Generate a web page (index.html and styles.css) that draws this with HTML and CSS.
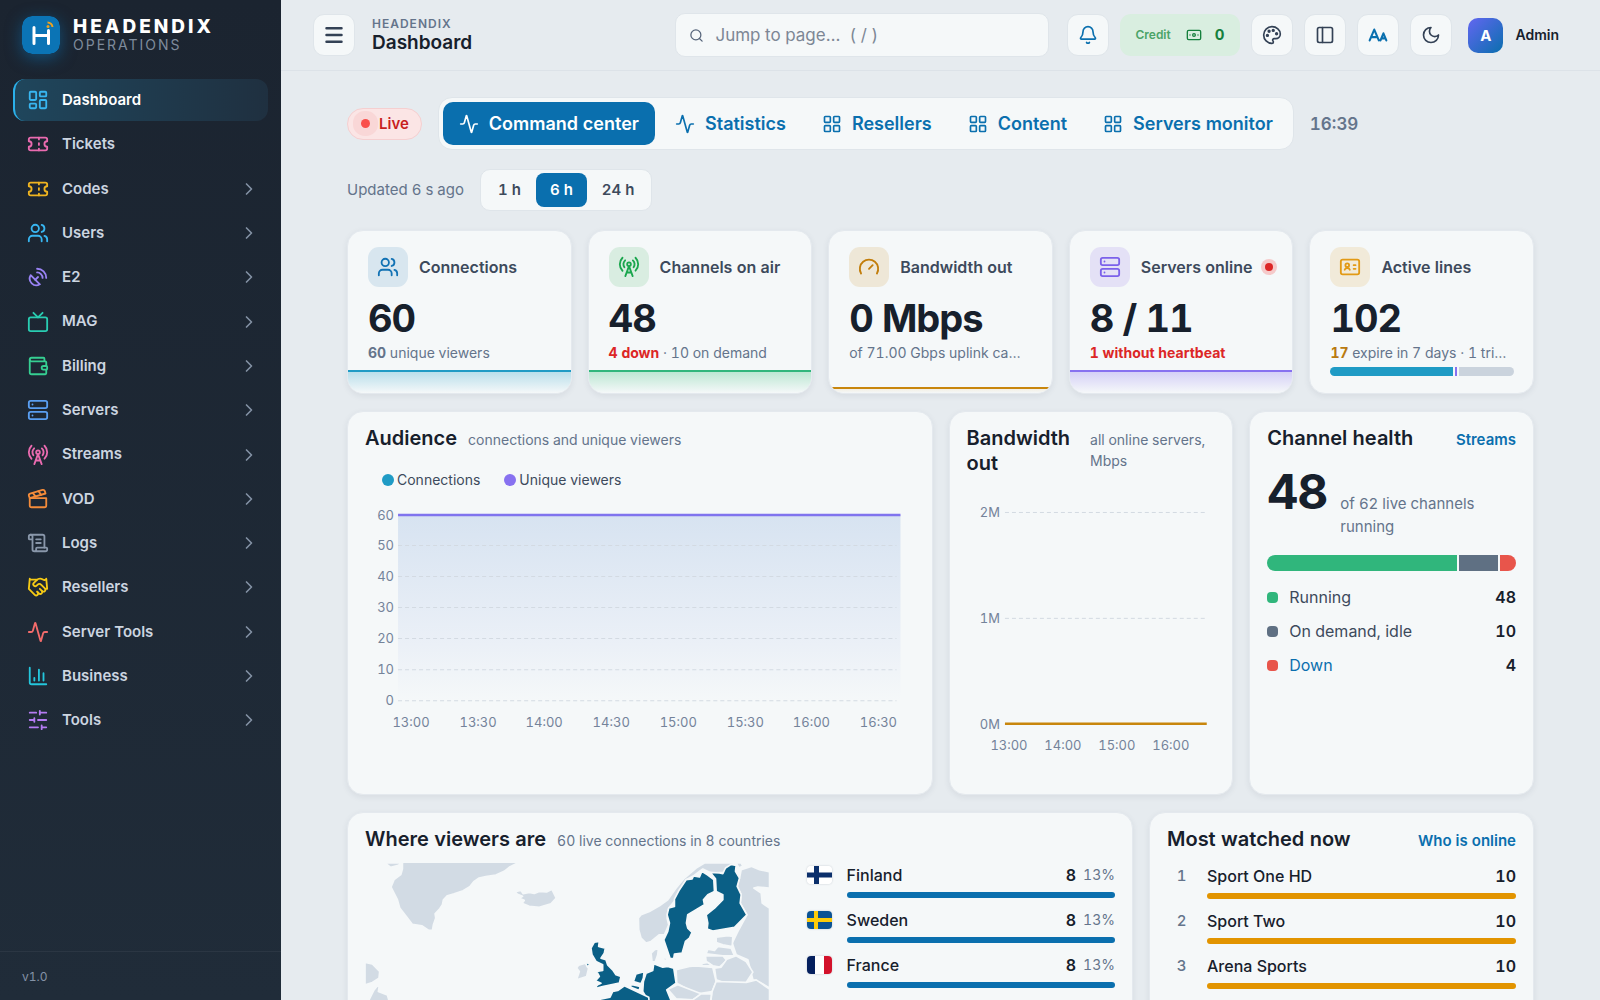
FILE: index.html
```html
<!DOCTYPE html>
<html lang="en">
<head>
<meta charset="utf-8">
<title>Headendix – Dashboard</title>
<meta name="viewport" content="width=device-width, initial-scale=1">
<link rel="stylesheet" href="styles.css">
</head>
<body>
<svg class="sprite" aria-hidden="true">
  <symbol id="i-dashboard" viewBox="0 0 24 24"><rect x="3" y="3" width="7" height="9" rx="1"/><rect x="14" y="3" width="7" height="5" rx="1"/><rect x="14" y="12" width="7" height="9" rx="1"/><rect x="3" y="16" width="7" height="5" rx="1"/></symbol>
  <symbol id="i-ticket" viewBox="0 0 24 24"><path d="M2 9a3 3 0 0 1 0 6v2a2 2 0 0 0 2 2h16a2 2 0 0 0 2-2v-2a3 3 0 0 1 0-6V7a2 2 0 0 0-2-2H4a2 2 0 0 0-2 2Z"/><path d="M13 5v2M13 17v2M13 11v2"/></symbol>
  <symbol id="i-users" viewBox="0 0 24 24"><path d="M16 21v-2a4 4 0 0 0-4-4H6a4 4 0 0 0-4 4v2"/><circle cx="9" cy="7" r="4"/><path d="M22 21v-2a4 4 0 0 0-3-3.87M16 3.13a4 4 0 0 1 0 7.75"/></symbol>
  <symbol id="i-dish" viewBox="0 0 24 24"><path d="M4 10a7.31 7.31 0 0 0 10 10Z"/><path d="m9 15 3-3"/><path d="M17 13a6 6 0 0 0-6-6"/><path d="M21 13A10 10 0 0 0 11 3"/></symbol>
  <symbol id="i-tv" viewBox="0 0 24 24"><rect x="2" y="7" width="20" height="15" rx="2"/><path d="m17 2-5 5-5-5"/></symbol>
  <symbol id="i-wallet" viewBox="0 0 24 24"><path d="M19 7V4a1 1 0 0 0-1-1H5a2 2 0 0 0 0 4h15a1 1 0 0 1 1 1v4h-3a2 2 0 0 0 0 4h3a1 1 0 0 0 1-1v-2a1 1 0 0 0-1-1"/><path d="M3 5v14a2 2 0 0 0 2 2h15a1 1 0 0 0 1-1v-4"/></symbol>
  <symbol id="i-server" viewBox="0 0 24 24"><rect x="2" y="2" width="20" height="8" rx="2"/><rect x="2" y="14" width="20" height="8" rx="2"/><path d="M6 6h.01M6 18h.01"/></symbol>
  <symbol id="i-tower" viewBox="0 0 24 24"><path d="M4.9 16.1C1 12.2 1 5.8 4.9 1.9"/><path d="M7.8 4.7a6.14 6.14 0 0 0-.8 7.5"/><circle cx="12" cy="9" r="2"/><path d="M16.2 4.8c2 2 2.26 5.11.8 7.47"/><path d="M19.1 1.9a9.96 9.96 0 0 1 0 14.1"/><path d="M9.5 18h5M8 22l4-11 4 11"/></symbol>
  <symbol id="i-clapper" viewBox="0 0 24 24"><path d="M20.2 6 3 11l-.9-2.4c-.3-1.1.3-2.2 1.3-2.5l13.5-4c1.1-.3 2.2.3 2.5 1.3Z"/><path d="m6.2 5.3 3.1 3.9M12.4 3.4l3.1 4"/><path d="M3 11h18v8a2 2 0 0 1-2 2H5a2 2 0 0 1-2-2Z"/></symbol>
  <symbol id="i-scroll" viewBox="0 0 24 24"><path d="M15 12h-5M15 8h-5M19 17V5a2 2 0 0 0-2-2H4"/><path d="M8 21h12a2 2 0 0 0 2-2v-1a1 1 0 0 0-1-1H11a1 1 0 0 0-1 1v1a2 2 0 1 1-4 0V5a2 2 0 1 0-4 0v2a1 1 0 0 0 1 1h3"/></symbol>
  <symbol id="i-handshake" viewBox="0 0 24 24"><path d="m11 17 2 2a1 1 0 1 0 3-3"/><path d="m14 14 2.5 2.5a1 1 0 1 0 3-3l-3.88-3.88a3 3 0 0 0-4.24 0l-.88.88a1 1 0 1 1-3-3l2.81-2.81a5.79 5.79 0 0 1 7.06-.87l.47.28a2 2 0 0 0 1.42.25L21 4"/><path d="m21 3 1 11h-2M3 3 2 14l6.5 6.5a1 1 0 1 0 3-3M3 4h8"/></symbol>
  <symbol id="i-activity" viewBox="0 0 24 24"><path d="M22 12h-2.48a2 2 0 0 0-1.93 1.46l-2.35 8.36a.25.25 0 0 1-.48 0L9.24 2.18a.25.25 0 0 0-.48 0l-2.35 8.36A2 2 0 0 1 4.49 12H2"/></symbol>
  <symbol id="i-chart" viewBox="0 0 24 24"><path d="M3 3v16a2 2 0 0 0 2 2h16M18 17V9M13 17V5M8 17v-3"/></symbol>
  <symbol id="i-sliders" viewBox="0 0 24 24"><path d="M21 4h-7M10 4H3M21 12h-9M8 12H3M21 20h-5M12 20H3M14 2v4M8 10v4M16 18v4"/></symbol>
  <symbol id="i-chevron" viewBox="0 0 24 24"><path d="m9 18 6-6-6-6"/></symbol>
  <symbol id="i-menu" viewBox="0 0 24 24"><path d="M3 4h18M3 12h18M3 20h18"/></symbol>
  <symbol id="i-search" viewBox="0 0 24 24"><circle cx="11" cy="11" r="8"/><path d="m21 21-4.3-4.3"/></symbol>
  <symbol id="i-bell" viewBox="0 0 24 24"><path d="M10.3 21a2 2 0 0 0 3.4 0"/><path d="M3.26 15.33A1 1 0 0 0 4 17h16a1 1 0 0 0 .74-1.67C19.41 13.96 18 12.5 18 8A6 6 0 0 0 6 8c0 4.5-1.41 5.96-2.74 7.33"/></symbol>
  <symbol id="i-cash" viewBox="0 0 24 24"><rect x="2" y="5" width="20" height="14" rx="2"/><circle cx="12" cy="12" r="2"/><path d="M6 12h.01M18 12h.01"/></symbol>
  <symbol id="i-palette" viewBox="0 0 24 24"><path d="M12 2a10 10 0 0 0 0 20c.93 0 1.65-.75 1.65-1.69 0-.43-.18-.83-.44-1.12-.29-.29-.44-.65-.44-1.13a1.64 1.64 0 0 1 1.67-1.67h1.99c3.05 0 5.55-2.5 5.55-5.55C21.97 6.01 17.46 2 12 2Z"/><circle cx="13.5" cy="6.5" r="1"/><circle cx="17.5" cy="10.5" r="1"/><circle cx="8.5" cy="7.5" r="1"/><circle cx="6.5" cy="12.5" r="1"/></symbol>
  <symbol id="i-panel" viewBox="0 0 24 24"><rect x="3" y="3" width="18" height="18" rx="2"/><path d="M9 3v18"/></symbol>
  <symbol id="i-letters" viewBox="0 0 24 24"><path stroke-width="2.500" d="m2 18.500 5.500-13 5.500 13M4 14.500h7M15 18.500l3.500-8.500 3.500 8.500M16.500 16h4"/></symbol>
  <symbol id="i-moon" viewBox="0 0 24 24"><path d="M12 3a6 6 0 0 0 9 9 9 9 0 1 1-9-9Z"/></symbol>
  <symbol id="i-grid" viewBox="0 0 24 24"><rect x="3" y="3" width="7" height="7" rx="1"/><rect x="14" y="3" width="7" height="7" rx="1"/><rect x="14" y="14" width="7" height="7" rx="1"/><rect x="3" y="14" width="7" height="7" rx="1"/></symbol>
  <symbol id="i-gauge" viewBox="0 0 24 24"><path d="m12 14 4-4M3.340 19a10 10 0 1 1 17.320 0"/></symbol>
  <symbol id="i-idcard" viewBox="0 0 24 24"><path d="M16 10h2M16 14h2M6.200 15a3 3 0 0 1 5.600 0"/><circle cx="9" cy="10" r="2"/><rect x="2" y="4" width="20" height="16" rx="2"/></symbol>
</svg>

<div class="app">
  <aside class="sidebar">
    <div class="brand">
      <svg class="brand-logo" viewBox="0 0 38 38" aria-hidden="true"><rect width="38" height="38" rx="10" fill="#0b74b5"/><path d="M12 11.500v16M26.500 14.500v13M12 19.500h14.500" fill="none" stroke="#fff" stroke-width="3" stroke-linecap="round"/><path d="M25.500 6.500a5 5 0 0 1 5 4.500" fill="none" stroke="#f0a31c" stroke-width="2"/><circle cx="26" cy="10.500" r="1.500" fill="#f0a31c"/></svg>
      <div class="brand-text"><strong>HEADENDIX</strong><span>OPERATIONS</span></div>
    </div>
    <nav class="nav" aria-label="Main">
      <a class="nav-item active" href="#"><svg class="icon c-sky"><use href="#i-dashboard"/></svg><span>Dashboard</span></a>
      <a class="nav-item" href="#"><svg class="icon c-pink"><use href="#i-ticket"/></svg><span>Tickets</span></a>
      <a class="nav-item" href="#"><svg class="icon c-gold"><use href="#i-ticket"/></svg><span>Codes</span><svg class="chev"><use href="#i-chevron"/></svg></a>
      <a class="nav-item" href="#"><svg class="icon c-sky"><use href="#i-users"/></svg><span>Users</span><svg class="chev"><use href="#i-chevron"/></svg></a>
      <a class="nav-item" href="#"><svg class="icon c-violet"><use href="#i-dish"/></svg><span>E2</span><svg class="chev"><use href="#i-chevron"/></svg></a>
      <a class="nav-item" href="#"><svg class="icon c-teal"><use href="#i-tv"/></svg><span>MAG</span><svg class="chev"><use href="#i-chevron"/></svg></a>
      <a class="nav-item" href="#"><svg class="icon c-green"><use href="#i-wallet"/></svg><span>Billing</span><svg class="chev"><use href="#i-chevron"/></svg></a>
      <a class="nav-item" href="#"><svg class="icon c-blue"><use href="#i-server"/></svg><span>Servers</span><svg class="chev"><use href="#i-chevron"/></svg></a>
      <a class="nav-item" href="#"><svg class="icon c-pink"><use href="#i-tower"/></svg><span>Streams</span><svg class="chev"><use href="#i-chevron"/></svg></a>
      <a class="nav-item" href="#"><svg class="icon c-orange"><use href="#i-clapper"/></svg><span>VOD</span><svg class="chev"><use href="#i-chevron"/></svg></a>
      <a class="nav-item" href="#"><svg class="icon c-slate"><use href="#i-scroll"/></svg><span>Logs</span><svg class="chev"><use href="#i-chevron"/></svg></a>
      <a class="nav-item" href="#"><svg class="icon c-yellow"><use href="#i-handshake"/></svg><span>Resellers</span><svg class="chev"><use href="#i-chevron"/></svg></a>
      <a class="nav-item" href="#"><svg class="icon c-red"><use href="#i-activity"/></svg><span>Server Tools</span><svg class="chev"><use href="#i-chevron"/></svg></a>
      <a class="nav-item" href="#"><svg class="icon c-cyan"><use href="#i-chart"/></svg><span>Business</span><svg class="chev"><use href="#i-chevron"/></svg></a>
      <a class="nav-item" href="#"><svg class="icon c-purple"><use href="#i-sliders"/></svg><span>Tools</span><svg class="chev"><use href="#i-chevron"/></svg></a>
    </nav>
    <footer class="version">v1.0</footer>
  </aside>

  <div class="page">
    <header class="topbar">
      <button class="icon-btn menu-btn" type="button" aria-label="Toggle menu"><svg class="icon"><use href="#i-menu"/></svg></button>
      <div class="crumb"><span>HEADENDIX</span><h1>Dashboard</h1></div>
      <label class="search"><svg class="icon"><use href="#i-search"/></svg><input type="search" aria-label="Jump to page" placeholder="Jump to page…  ( / )"></label>
      <div class="tools">
        <button class="icon-btn accent" type="button" aria-label="Notifications"><svg class="icon"><use href="#i-bell"/></svg></button>
        <a class="credit" href="#"><span>Credit</span><svg class="icon"><use href="#i-cash"/></svg><b>0</b></a>
        <button class="icon-btn" type="button" aria-label="Theme"><svg class="icon"><use href="#i-palette"/></svg></button>
        <button class="icon-btn" type="button" aria-label="Layout"><svg class="icon"><use href="#i-panel"/></svg></button>
        <button class="icon-btn accent" type="button" aria-label="Text size"><svg class="icon"><use href="#i-letters"/></svg></button>
        <button class="icon-btn" type="button" aria-label="Dark mode"><svg class="icon"><use href="#i-moon"/></svg></button>
        <button class="account" type="button"><span class="avatar">A</span><span>Admin</span></button>
      </div>
    </header>

    <main class="content">
      <div class="bar">
        <span class="live"><i></i>Live</span>
        <nav class="tabs" aria-label="Dashboards">
          <a class="tab active" href="#"><svg class="icon"><use href="#i-activity"/></svg>Command center</a>
          <a class="tab" href="#"><svg class="icon"><use href="#i-activity"/></svg>Statistics</a>
          <a class="tab" href="#"><svg class="icon"><use href="#i-grid"/></svg>Resellers</a>
          <a class="tab" href="#"><svg class="icon"><use href="#i-grid"/></svg>Content</a>
          <a class="tab" href="#"><svg class="icon"><use href="#i-grid"/></svg>Servers monitor</a>
        </nav>
        <time class="clock">16:39</time>
      </div>
      <div class="bar">
        <span class="updated">Updated 6 s ago</span>
        <div class="segments" role="group" aria-label="Time range">
          <button type="button">1 h</button><button class="on" type="button" aria-pressed="true">6 h</button><button type="button">24 h</button>
        </div>
      </div>

      <section class="kpis">
        <article class="card kpi blue">
          <header><span class="kpi-icon"><svg class="icon"><use href="#i-users"/></svg></span><h2>Connections</h2></header>
          <p class="value">60</p><p class="note"><b>60</b> unique viewers</p><div class="spark"></div>
        </article>
        <article class="card kpi green">
          <header><span class="kpi-icon"><svg class="icon"><use href="#i-tower"/></svg></span><h2>Channels on air</h2></header>
          <p class="value">48</p><p class="note"><b class="bad">4 down</b> · 10 on demand</p><div class="spark"></div>
        </article>
        <article class="card kpi amber">
          <header><span class="kpi-icon"><svg class="icon"><use href="#i-gauge"/></svg></span><h2>Bandwidth out</h2></header>
          <p class="value">0 Mbps</p><p class="note">of 71.00 Gbps uplink ca…</p><div class="spark low"></div>
        </article>
        <article class="card kpi violet">
          <header><span class="kpi-icon"><svg class="icon"><use href="#i-server"/></svg></span><h2>Servers online</h2><i class="alert"></i></header>
          <p class="value">8 / 11</p><p class="note"><b class="bad">1 without heartbeat</b></p><div class="spark"></div>
        </article>
        <article class="card kpi orange">
          <header><span class="kpi-icon"><svg class="icon"><use href="#i-idcard"/></svg></span><h2>Active lines</h2></header>
          <p class="value">102</p><p class="note"><b class="warn">17</b> expire in 7 days · 1 tri…</p>
          <div class="meter"><i class="s-teal" style="flex-grow:102"></i><i class="s-trial" style="flex-grow:1"></i><i class="s-rest" style="flex-grow:46"></i></div>
        </article>
      </section>

      <section class="panels">
        <article class="card panel w6">
          <header><h2>Audience</h2><p>connections and unique viewers</p></header>
          <div class="legend"><span><i class="s-teal"></i>Connections</span><span><i class="s-violet"></i>Unique viewers</span></div>
          <svg class="chart" viewBox="0 0 549 240" role="img" aria-label="Audience over time">
            <defs><linearGradient id="fill" x1="0" y1="0" x2="0" y2="1"><stop offset="0" stop-color="#d7e3f1"/><stop offset="0.700" stop-color="#ebf0f7"/><stop offset="1" stop-color="#f5f8f9"/></linearGradient></defs>
            <rect x="33" y="20" width="502" height="185" fill="url(#fill)"/>
            <path class="gridline" d="M33 50.500h498M33 81.500h498M33 112.500h498M33 143.500h498M33 174.500h498M33 205.500h498"/>
            <path d="M33 20h502" stroke="#8074ee" stroke-width="2.500"/>
            <g class="axis end"><text x="29" y="25">60</text><text x="29" y="55">50</text><text x="29" y="86">40</text><text x="29" y="117">30</text><text x="29" y="148">20</text><text x="29" y="179">10</text><text x="29" y="210">0</text></g>
            <g class="axis mid"><text x="46" y="232">13:00</text><text x="113" y="232">13:30</text><text x="179" y="232">14:00</text><text x="246" y="232">14:30</text><text x="313" y="232">15:00</text><text x="380" y="232">15:30</text><text x="446" y="232">16:00</text><text x="513" y="232">16:30</text></g>
          </svg>
        </article>
        <article class="card panel w3">
          <header><h2>Bandwidth out</h2><p>all online servers, Mbps</p></header>
          <svg class="chart low-chart" viewBox="0 0 249 272" role="img" aria-label="Bandwidth over time">
            <path class="gridline" d="M38 24.500h202M38 130.500h202"/>
            <path d="M38 236h202" stroke="#c8860d" stroke-width="2.500"/>
            <g class="axis end"><text x="33" y="29">2M</text><text x="33" y="135">1M</text><text x="33" y="241">0M</text></g>
            <g class="axis mid"><text x="42" y="262">13:00</text><text x="96" y="262">14:00</text><text x="150" y="262">15:00</text><text x="204" y="262">16:00</text></g>
          </svg>
        </article>
        <article class="card panel w3">
          <header><h2>Channel health</h2><a href="#">Streams</a></header>
          <div class="total"><strong>48</strong><span>of 62 live channels running</span></div>
          <div class="stack"><i class="s-green" style="flex-grow:48"></i><i class="s-slate" style="flex-grow:10"></i><i class="s-red" style="flex-grow:4"></i></div>
          <ul class="states">
            <li><i class="s-green"></i><span>Running</span><b>48</b></li>
            <li><i class="s-slate"></i><span>On demand, idle</span><b>10</b></li>
            <li><i class="s-red"></i><a href="#">Down</a><b>4</b></li>
          </ul>
        </article>

        <article class="card panel w8">
          <header><h2>Where viewers are</h2><p>60 live connections in 8 countries</p></header>
          <div class="geo">
            <svg class="map" viewBox="78 190 1209 480" role="img" aria-label="Map of viewers">
              <g class="land">
                <path d="M190 180H555L535 190 510 203 495 215 470 226 440 231 420 235 405 245 393 260 372 273 345 282 325 288 313 300 310 315 302 327 288 342 290 355 283 375 280 392 268 391 248 378 220 374 200 348 182 325 175 300 165 280 156 262 165 240 185 225 190 208Z"/>
                <path d="M138 190H190L175 198 155 203Z"/>
                <path d="M527 276 545 272 552 282 570 278 585 281 600 275 622 277 638 269 651 295 635 312 600 323 570 320 548 311 555 302 540 296 550 290 535 284Z"/>
                <path d="M897 355 905 345 930 335 960 318 985 300 1010 265 1035 235 1070 205 1095 190 1190 190 1170 200 1155 218 1115 220 1090 208 1060 230 1040 240 1020 275 1005 305 988 325 983 355 988 375 975 405 960 405 935 425 920 430 905 415 898 390Z"/>
                <path d="M1190 190 1205 190 1210 200 1198 204Z"/>
                <path d="M1205 210 1235 200 1260 210 1290 216V265L1255 262 1243 265 1265 280 1268 310 1290 325V565L1262 548 1240 540 1225 480 1190 465 1178 430 1195 395 1222 345 1202 310 1205 285 1193 260 1200 235Z"/>
                <path d="M935 460 945 450 957 447 955 465 948 485 938 487ZM968 475 982 472 980 485Z"/>
                <path d="M1130 412 1165 408 1180 410 1178 440 1150 435 1130 428Z"/>
                <path d="M1100 462 1105 448 1125 452 1135 440 1175 445 1185 468 1150 468Z"/>
                <path d="M1098 468 1150 468 1162 482 1140 502 1120 498 1100 485Z"/>
                <path d="M1078 492 1105 488 1118 498 1090 497Z"/>
                <path d="M1145 502 1162 478 1190 468 1220 485 1240 517 1220 548 1150 547 1130 540 1125 505Z"/>
                <path d="M1010 510 1050 500 1070 498 1120 503 1130 545 1118 575 1075 582 1040 565 1012 550Z"/>
                <path d="M1130 545 1220 548 1250 540 1290 568V670H1105L1118 575Z"/>
                <path d="M985 568 1015 555 1060 572 1085 582 1060 600 1010 597Z"/>
                <path d="M1060 600 1085 582 1116 582 1105 670H960L1010 600Z"/>
                <path d="M712 505 718 496 738 490 748 505 742 530 712 540 720 515Z"/>
                <path d="M78 488 100 492 122 515 120 535 100 548 78 555Z"/>
                <path d="M90 600 105 570 122 550 118 575 145 585 152 610 100 640Z"/>
              </g>
              <g class="audience">
                <path d="M1040 240 1058 238 1062 229 1080 232 1087 215 1105 226 1123 240 1125 275 1105 285 1092 300 1095 315 1070 330 1045 345 1041 370 1045 385 1058 398 1050 415 1038 425 1028 460 1005 463 1003 476 992 476 985 455 973 420 985 395 990 370 983 345 988 325 1005 320 1005 298 1020 270Z"/>
                <path d="M1112 218 1140 220 1150 222 1158 205 1175 194 1190 197 1188 215 1200 235 1193 260 1205 285 1202 310 1222 345 1185 383 1120 394 1103 388 1105 370 1100 345 1125 325 1150 300 1150 285 1130 275 1128 237Z"/>
                <path d="M765 427 780 425 778 440 798 445 795 460 785 475 800 480 805 495 820 510 830 525 845 530 840 550 815 555 790 560 765 567 775 555 785 550 768 543 780 530 772 515 790 512 790 495 770 485 758 465 755 445Z"/>
                <path d="M738 488 752 492 745 503Z"/>
                <path d="M943 492 970 502 985 500 1003 505 1010 550 982 570 995 602 990 640 930 640 925 600 910 575 912 545 920 520 940 512Z"/>
                <path d="M890 522 914 516 912 535 905 552 882 545Z"/>
                <path d="M872 553 902 560 900 572 875 562Z"/>
                <path d="M773 600 812 592 820 575 835 572 855 558 890 574 928 592 935 670H820L810 615Z"/>
              </g>
            </svg>
            <ul class="ranks flags">
              <li><svg class="flag" viewBox="0 0 25 18" aria-hidden="true"><path fill="#fff" d="M0 0h25v18H0z"/><path stroke="#0b2f6b" stroke-width="5" d="M9.500 0v18M0 9h25"/></svg><span>Finland</span><b>8</b><small>13%</small><i class="s-blue" style="width:100%"></i></li>
              <li><svg class="flag" viewBox="0 0 25 18" aria-hidden="true"><path fill="#0b5394" d="M0 0h25v18H0z"/><path stroke="#fdcb0a" stroke-width="4" d="M9 0v18M0 9h25"/></svg><span>Sweden</span><b>8</b><small>13%</small><i class="s-blue" style="width:100%"></i></li>
              <li><svg class="flag" viewBox="0 0 25 18" aria-hidden="true"><path fill="#fff" d="M0 0h25v18H0z"/><path fill="#05205e" d="M0 0h8v18H0z"/><path fill="#d3122b" d="M17 0h8v18h-8z"/></svg><span>France</span><b>8</b><small>13%</small><i class="s-blue" style="width:100%"></i></li>
            </ul>
          </div>
        </article>
        <article class="card panel w4">
          <header><h2>Most watched now</h2><a href="#">Who is online</a></header>
          <ol class="ranks">
            <li><em>1</em><span>Sport One HD</span><b>10</b><i class="s-orange" style="width:100%"></i></li>
            <li><em>2</em><span>Sport Two</span><b>10</b><i class="s-orange" style="width:100%"></i></li>
            <li><em>3</em><span>Arena Sports</span><b>10</b><i class="s-orange" style="width:100%"></i></li>
          </ol>
        </article>
      </section>
    </main>
  </div>
</div>
</body>
</html>
```
FILE: styles.css
```css
:root {
  --ink: #17202c;
  --text: #3d4a5c;
  --muted: #64748b;
  --blue: #0a6fae;
  --surface: #f5f8f9;
  --line: #dce2e8;
}

* { box-sizing: border-box; }

body {
  margin: 0;
  font: 16px/24px Inter, "Liberation Sans", sans-serif;
  font-variant-numeric: tabular-nums;
  color: var(--ink);
  background: #e6ebef;
}

h1, h2, p, ul, ol { margin: 0; padding: 0; }
ul, ol { list-style: none; }
a { color: var(--blue); text-decoration: none; }
button, input { font: inherit; font-variant-numeric: inherit; color: inherit; }
button { cursor: pointer; }

.sprite { position: absolute; width: 0; height: 0; }

.icon, .chev {
  flex: none;
  fill: none;
  stroke: currentColor;
  stroke-width: 2;
  stroke-linecap: round;
  stroke-linejoin: round;
}

.app { display: flex; height: 100vh; }

/* Sidebar */
.sidebar {
  flex: none;
  display: flex;
  flex-direction: column;
  width: 281px;
  background: linear-gradient(#1b2430, #202c39);
}

.brand {
  display: flex;
  align-items: center;
  gap: 13px;
  padding: 16px 22px 25px;
}
.brand-logo {
  width: 38px;
  height: 38px;
  border-radius: 10px;
  box-shadow: 0 4px 16px #0b74b588;
}
.brand-text { display: flex; flex-direction: column; }
.brand-text strong { font-size: 19px; line-height: 20px; font-weight: 800; letter-spacing: 3px; color: #fff; }
.brand-text span { font-size: 14px; line-height: 16px; letter-spacing: 2px; color: #7f8b9c; }

.nav {
  flex: 1;
  display: flex;
  flex-direction: column;
  gap: 2px;
  padding: 0 13px;
}
.nav-item {
  display: flex;
  align-items: center;
  gap: 13px;
  padding: 9px 9px 9px 12px;
  border-left: 2px solid transparent;
  border-radius: 12px;
  font-size: 15px;
  line-height: 1.62;
  font-weight: 600;
  color: #ccd5e0;
}
.nav-item .icon { width: 22px; height: 22px; }
.nav-item .chev { width: 20px; height: 20px; margin-left: auto; color: #8391a4; }
.nav-item.active {
  color: #fff;
  border-left-color: #2bb0ea;
  background: linear-gradient(90deg, #1f465c, #1f3040);
}
.c-sky { color: #38b6f1; }
.c-pink { color: #ea6bb0; }
.c-gold { color: #efb420; }
.c-violet { color: #9a83f5; }
.c-teal { color: #29cdb2; }
.c-green { color: #36cf92; }
.c-blue { color: #5a9ff2; }
.c-orange { color: #f38b3a; }
.c-slate { color: #8997aa; }
.c-yellow { color: #f5ca15; }
.c-red { color: #f36b6b; }
.c-cyan { color: #24c6dc; }
.c-purple { color: #b57bf3; }

.version {
  padding: 13px 22px 12px;
  border-top: 1px solid #2b3643;
  font-size: 12px;
  line-height: 23px;
  color: #8492a6;
}

/* Top bar */
.page {
  flex: 1;
  min-width: 0;
  display: flex;
  flex-direction: column;
}
.topbar {
  flex: none;
  display: flex;
  align-items: center;
  height: 71px;
  padding: 0 41px 0 32px;
  border-bottom: 1px solid var(--line);
}
.icon-btn {
  flex: none;
  display: grid;
  place-items: center;
  width: 42px;
  height: 42px;
  padding: 0;
  border: 1px solid #dfe5ea;
  border-radius: 11px;
  background: var(--surface);
  color: #334155;
}
.icon-btn .icon { width: 20px; height: 20px; }
.menu-btn .icon { stroke-width: 3; }
.icon-btn.accent { color: var(--blue); }
.crumb { margin-left: 17px; }
.crumb span {
  display: block;
  font-size: 12px;
  line-height: 14px;
  font-weight: 600;
  letter-spacing: 1px;
  color: var(--muted);
}
.crumb h1 { font-size: 19px; line-height: 23px; font-weight: 600; }
.search {
  display: flex;
  align-items: center;
  gap: 11px;
  width: 374px;
  height: 44px;
  margin-left: auto;
  padding: 0 13px;
  border: 1px solid #dfe5ea;
  border-radius: 10px;
  background: var(--surface);
  color: #55647a;
}
.search .icon { width: 15px; height: 15px; }
.search input {
  flex: 1;
  min-width: 0;
  padding: 0;
  border: 0;
  outline: 0;
  background: none;
  font-size: 17px;
}
.search input::placeholder { color: #7d8795; opacity: 1; }
.tools {
  display: flex;
  align-items: center;
  gap: 11px;
  margin-left: 18px;
}
.credit {
  display: flex;
  align-items: center;
  height: 42px;
  padding: 0 16px 0 15px;
  border-radius: 11px;
  background: #d9eee0;
  font-size: 12px;
  font-weight: 600;
  color: #4ba468;
}
.credit .icon { width: 16px; height: 16px; margin: 0 13px 0 15px; color: #15803d; }
.credit b { font-size: 15px; font-weight: 700; color: #15803d; }
.account {
  display: flex;
  align-items: center;
  gap: 12px;
  margin-left: 5px;
  padding: 0;
  border: 0;
  background: none;
  font-size: 14px;
  font-weight: 600;
}
.avatar {
  width: 35px;
  height: 35px;
  border-radius: 10px;
  background: linear-gradient(135deg, #6366f1, #0a6fae);
  font-size: 15px;
  line-height: 35px;
  font-weight: 700;
  text-align: center;
  color: #fff;
}

/* Content */
.content {
  flex: 1;
  min-height: 0;
  overflow-y: auto;
  scrollbar-width: none;
  display: flex;
  flex-direction: column;
  gap: 19px;
  padding: 26px 66px;
}
.bar { display: flex; align-items: center; gap: 16px; flex: none; }
.live {
  display: flex;
  align-items: center;
  gap: 9px;
  height: 32px;
  padding: 0 12px 0 13px;
  border: 1px solid #f5cfd0;
  border-radius: 16px;
  background: #fbe5e5;
  font-size: 15px;
  font-weight: 600;
  color: #c81e1e;
}
.live i { width: 9px; height: 9px; border-radius: 50%; background: #f9504c; box-shadow: 0 0 0 8px #f9d7d7; }
.tabs {
  display: flex;
  gap: 4px;
  padding: 4px;
  border: 1px solid #dfe5ea;
  border-radius: 14px;
  background: var(--surface);
}
.tab {
  display: flex;
  align-items: center;
  gap: 10px;
  height: 43px;
  padding: 0 16px;
  border-radius: 10px;
  font-size: 18px;
  font-weight: 600;
  white-space: nowrap;
}
.tab .icon { width: 20px; height: 20px; }
.tab.active { background: var(--blue); color: #fff; }
.clock { font-size: 17px; font-weight: 600; color: var(--muted); }
.updated { font-size: 15px; color: var(--muted); }
.segments {
  display: flex;
  gap: 1px;
  padding: 3px;
  border: 1px solid #dfe5ea;
  border-radius: 10px;
  background: var(--surface);
}
.segments button {
  height: 34px;
  padding: 0 14px;
  border: 0;
  border-radius: 8px;
  background: none;
  font-size: 15px;
  font-weight: 600;
  color: var(--text);
}
.segments .on { background: var(--blue); color: #fff; }

.card {
  border: 1px solid #e4e9ee;
  border-radius: 16px;
  background: var(--surface);
  box-shadow: 0 2px 6px #26374d14;
}

/* Headline figures */
.kpis { display: grid; grid-template-columns: repeat(5, minmax(0, 1fr)); gap: 16px; flex: none; }
.kpi {
  display: flex;
  flex-direction: column;
  min-height: 164px;
  padding-top: 16px;
  overflow: hidden;
}
.kpi > * { margin-left: 20px; margin-right: 19px; }
.kpi header { display: flex; align-items: center; gap: 11px; }
.kpi h2 { flex: 1; font-size: 16px; line-height: 24px; font-weight: 600; color: var(--text); white-space: nowrap; }
.kpi-icon {
  display: grid;
  place-items: center;
  width: 40px;
  height: 40px;
  border-radius: 11px;
  color: var(--tone);
  background: var(--tint);
}
.kpi-icon .icon { width: 22px; height: 22px; }
.kpi .value { margin-top: 10px; font-size: 38px; line-height: 42px; font-weight: 700; letter-spacing: -1px; }
.kpi .note {
  margin-top: 3px;
  font-size: 14px;
  line-height: 22px;
  color: var(--muted);
  white-space: nowrap;
}
.note b { font-weight: 700; }
.note .bad { color: #dc2626; }
.note .warn { color: #b97a10; }
.kpi .spark {
  height: 23px;
  margin: auto 0 0;
  border-top: 2px solid var(--line-tone);
  background: linear-gradient(var(--glow), var(--surface));
}
.kpi .spark.low { height: 6px; }
.blue { --tone: #1272b4; --tint: #d8e6ef; --line-tone: #1f9bc5; --glow: #b9dfeb; }
.green { --tone: #1ba64e; --tint: #d9ede1; --line-tone: #30b67c; --glow: #bce7d3; }
.amber { --tone: #c27d0a; --tint: #eee7d7; --line-tone: #c8860d; --glow: #f3efe4; }
.violet { --tone: #7b61ea; --tint: #e4e1f6; --line-tone: #8771f0; --glow: #d5d0f7; }
.orange { --tone: #e29a16; --tint: #f1ead9; }
.alert {
  width: 8px;
  height: 8px;
  border-radius: 50%;
  background: #dc2626;
  box-shadow: 0 0 0 4px #f5caca;
}
.meter {
  display: flex;
  gap: 2px;
  height: 9px;
  margin-top: 3px;
  border-radius: 5px;
  overflow: hidden;
}

.s-teal { background: #1f9bc5; }
.s-violet { background: #8771f0; }
.s-trial { background: #8771f0; }
.s-rest { background: #cad3dd; }
.s-green { background: #30b67c; }
.s-slate { background: #5f7083; }
.s-red { background: #e8554b; }
.s-blue { background: #0a6fae; }
.s-orange { background: #e29400; }

/* Panels */
.panels {
  display: grid;
  grid-template-columns: repeat(12, minmax(0, 1fr));
  gap: 17px 16px;
  flex: none;
  margin-top: -2px;
}
.w3 { grid-column: span 3; }
.w4 { grid-column: span 4; }
.w6 { grid-column: span 6; }
.w8 { grid-column: span 8; }
.panel { padding: 14px 17px 18px; }
.w3, .w6 { min-height: 384px; }
.panel header { display: flex; align-items: baseline; gap: 11px; }
.panel h2 { font-size: 20px; line-height: 25px; font-weight: 600; }
.panel header p { font-size: 14px; line-height: 21px; color: var(--muted); }
.panel header a { margin-left: auto; font-size: 15px; font-weight: 600; }
.legend {
  display: flex;
  gap: 24px;
  margin: 17px 17px 3px;
  font-size: 14px;
  color: var(--text);
}
.legend span { display: flex; align-items: center; gap: 3px; }
.legend i { width: 12px; height: 12px; border-radius: 50%; }
.chart { display: block; width: 100%; }
.low-chart { margin-top: 12px; }
.gridline { fill: none; stroke: #d3dae2; stroke-dasharray: 4 3; }
.axis { font-size: 13px; fill: #74839a; }
.end { text-anchor: end; }
.mid { text-anchor: middle; }

.total { display: flex; align-items: baseline; gap: 13px; margin: 14px 0 17px; }
.total strong { font-size: 48px; line-height: 52px; font-weight: 700; letter-spacing: -1px; }
.total span { font-size: 15px; line-height: 23px; color: var(--muted); }
.stack { display: flex; gap: 2px; height: 16px; border-radius: 8px; overflow: hidden; }
.states { display: flex; flex-direction: column; gap: 10px; margin-top: 14px; }
.states li { display: flex; align-items: center; gap: 11px; color: var(--text); }
.states i { width: 11px; height: 11px; border-radius: 4px; }
.states b { margin-left: auto; font-weight: 600; color: var(--ink); }

.geo { display: grid; grid-template-columns: 403fr 308fr; gap: 38px; margin-top: 11px; }
.map { width: 100%; }
.land, .audience { stroke: var(--surface); stroke-width: 5; stroke-linejoin: round; }
.land { fill: #d2dbe4; }
.audience { fill: #0a5f86; }
.ranks { display: flex; flex-direction: column; gap: 10px; }
.ranks li {
  display: grid;
  grid-template-columns: 40px 1fr auto;
  align-items: center;
  row-gap: 5px;
}
.flags li { grid-template-columns: 40px 1fr auto 39px; }
.ranks span { font-weight: 500; }
.ranks b { font-weight: 600; }
.ranks small { font-size: 14px; text-align: right; color: var(--muted); }
.ranks em { width: 29px; font-size: 15px; font-style: normal; font-weight: 500; text-align: center; color: var(--muted); }
.ranks i { grid-column: 2 / -1; height: 6px; border-radius: 3px; }
.flag { width: 25px; height: 18px; border-radius: 4px; box-shadow: 0 0 2px #26374d40; }
.w4 .ranks { margin-top: 11px; }
```
